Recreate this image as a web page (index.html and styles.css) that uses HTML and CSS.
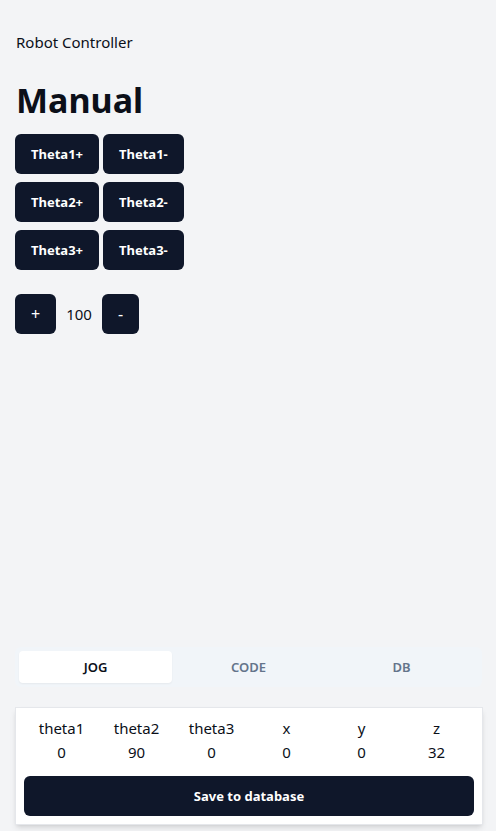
FILE: index.html
```html
<!DOCTYPE html>
<html lang="en">
<head>
<meta charset="utf-8">
<title>Robot Controller</title>
<link rel="stylesheet" href="styles.css">
</head>
<body>
<div class="page">
  <header class="header">Robot Controller</header>
  <h1 class="title">Manual</h1>
  <div class="jog">
    <div class="jog-row">
      <button class="btn">Theta1+</button>
      <button class="btn">Theta1-</button>
    </div>
    <div class="jog-row">
      <button class="btn">Theta2+</button>
      <button class="btn">Theta2-</button>
    </div>
    <div class="jog-row">
      <button class="btn">Theta3+</button>
      <button class="btn">Theta3-</button>
    </div>
  </div>
  <div class="step">
    <button class="btn btn-step">+</button>
    <span class="step-value">100</span>
    <button class="btn btn-step">-</button>
  </div>
  <div class="spacer"></div>
  <div class="tabs">
    <button class="tab active">JOG</button>
    <button class="tab">CODE</button>
    <button class="tab">DB</button>
  </div>
  <div class="card">
    <div class="grid">
      <div class="cell">theta1</div>
      <div class="cell">theta2</div>
      <div class="cell">theta3</div>
      <div class="cell">x</div>
      <div class="cell">y</div>
      <div class="cell">z</div>
      <div class="cell">0</div>
      <div class="cell">90</div>
      <div class="cell">0</div>
      <div class="cell">0</div>
      <div class="cell">0</div>
      <div class="cell">32</div>
    </div>
    <button class="btn btn-wide">Save to database</button>
  </div>
</div>
</body>
</html>
```
FILE: styles.css
```css
* { box-sizing: border-box; }
html, body { margin: 0; padding: 0; }
body {
  background: #f3f4f6;
  color: #0b0f19;
  font-family: "Noto Sans", "Open Sans", sans-serif;
}
.page {
  min-height: 100vh;
  display: flex;
  flex-direction: column;
  padding: 30px 15px 6px 15px;
}
.header {
  font-size: 15px;
  line-height: 24px;
  padding-left: 1px;
}
.title {
  font-size: 34px;
  line-height: 40px;
  font-weight: 700;
  margin: 26px 0 14px 1px;
}
.jog {
  display: flex;
  flex-direction: column;
  gap: 8px;
}
.jog-row {
  display: flex;
  gap: 4px;
}
.btn {
  font-family: inherit;
  background: #0f172a;
  color: #fff;
  border: none;
  border-radius: 6px;
  height: 40px;
  padding: 0 16px;
  font-size: 13px;
  font-weight: 700;
  cursor: pointer;
}
.btn-step {
  font-size: 16px;
  font-weight: 400;
}
.step {
  display: flex;
  align-items: center;
  gap: 10px;
  margin-top: 24px;
}
.step-value {
  font-size: 15px;
}
.spacer { flex: 1; }
.tabs {
  display: grid;
  grid-template-columns: 1fr 1fr 1fr;
  background: #f1f5f9;
  border-radius: 6px;
  padding: 4px;
  height: 40px;
  width: 467px;
}
.tab {
  font-family: inherit;
  border: none;
  background: transparent;
  color: #64748b;
  font-size: 13px;
  font-weight: 600;
  border-radius: 4px;
  height: 32px;
}
.tab.active {
  background: #fff;
  color: #0b0f19;
  box-shadow: 0 1px 2px rgba(0,0,0,0.05);
}
.card {
  margin-top: 20px;
  width: 468px;
  background: #fff;
  border: 1px solid #e5e7eb;
  box-shadow: 0 4px 6px -1px rgba(0,0,0,0.1), 0 2px 4px -2px rgba(0,0,0,0.1);
  padding: 8px;
}
.grid {
  display: grid;
  grid-template-columns: repeat(6, 1fr);
  text-align: center;
  font-size: 15px;
  line-height: 24px;
}
.btn-wide {
  width: 100%;
  margin-top: 12px;
  font-size: 13px;
}
```
